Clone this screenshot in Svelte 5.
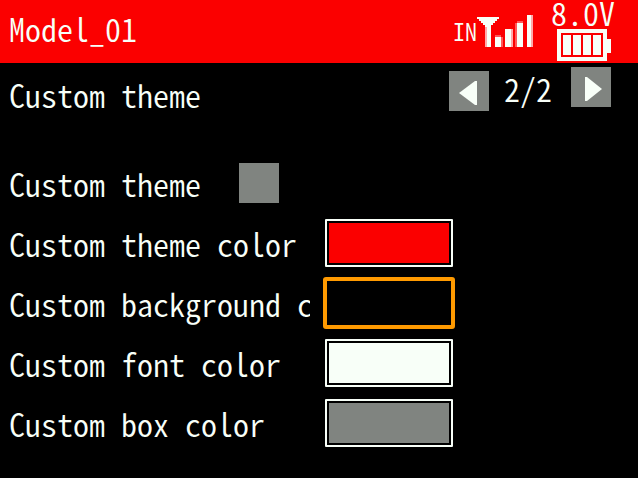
<script>
  const modelName = 'Model_01';
  const voltage = '8.0V';
  const pageCount = 2;

  let page = $state(2);
  let enabled = $state(false);
  let selected = $state('background');

  let colors = $state([
    { id: 'theme', label: 'Custom theme color', value: '#fb0000' },
    { id: 'background', label: 'Custom background color', value: '#000000' },
    { id: 'font', label: 'Custom font color', value: '#f8fff8' },
    { id: 'box', label: 'Custom box color', value: '#808480' }
  ]);
</script>

<div class="screen">
  <header class="topbar">
    <h1>{modelName}</h1>
    <div class="status">
      <span class="input-mode">IN</span>
      <svg class="signal" viewBox="0 0 56 32" shape-rendering="crispEdges" aria-hidden="true">
        <path fill="#f8fff8" d="M0 2h22v2h-2v2h-2v2h-2v2h-2v22h-4V12H8v-2H6V8H4V6H2V4H0z" />
        <path fill="#f8fff8" d="M18 22h6v10h-6zM28 14h6v18h-6zM40 8h6v24h-6zM50 0h4v32h-4z" />
        <path fill="#ffaaaa" d="M8 12h2v20H8zM34 14h2v18h-2zM54 0h2v32h-2z" />
        <path fill="#ff5858" d="M18 20h6v2h-6zM24 22h2v10h-2zM40 6h6v2h-6zM38 8h2v24h-2z" />
      </svg>
      <div class="battery">
        <span>{voltage}</span>
        <svg viewBox="0 0 56 32" shape-rendering="crispEdges" aria-hidden="true">
          <path fill="#f8fff8" fill-rule="evenodd" d="M2 0h50v10h4v14h-4v8H2zM6 4v24h42V4z" />
          <path fill="#f8fff8" d="M8 6h8v20H8zM18 6h8v20h-8zM28 6h8v20h-8zM38 6h8v20h-8z" />
        </svg>
      </div>
    </div>
  </header>

  <div class="title-row">
    <h2>Custom theme</h2>
    <nav class="pager">
      <button
        class="prev"
        aria-label="Previous page"
        onclick={() => (page = Math.max(1, page - 1))}
      >
        <svg viewBox="0 0 40 40"><path fill="#f8fff8" d="M10 22L26 10h2v24h-2z" /></svg>
      </button>
      <span>{page}/{pageCount}</span>
      <button
        class="next"
        aria-label="Next page"
        onclick={() => (page = Math.min(pageCount, page + 1))}
      >
        <svg viewBox="0 0 40 40"><path fill="#f8fff8" d="M14 10h2l15 12-15 12h-2z" /></svg>
      </button>
    </nav>
  </div>

  <main>
    <div class="row">
      <label class="short" for="enabled">Custom theme</label>
      <input id="enabled" type="checkbox" bind:checked={enabled} />
    </div>
    {#each colors as color (color.id)}
      <div class="row">
        <label for={color.id}>{color.label}</label>
        <input
          id={color.id}
          type="color"
          class:selected={selected === color.id}
          bind:value={color.value}
          onfocus={() => (selected = color.id)}
        />
      </div>
    {/each}
  </main>
</div>

<style>
  :global(body) {
    margin: 0;
    background: #000;
  }

  .screen {
    min-height: 100vh;
    background: #000;
    color: #f8fff8;
    font-family: 'Noto Sans CJK JP', 'Liberation Mono', monospace;
    font-size: 32px;
    font-weight: 350;
    line-height: 48px;
    /* half-width latin, every glyph is half an em */
    font-feature-settings: 'hwid' 1;
    white-space: nowrap;
  }

  h1,
  h2 {
    margin: 0;
    font-size: 32px;
    font-weight: 350;
  }

  /* Top bar */
  .topbar {
    display: flex;
    align-items: flex-start;
    justify-content: space-between;
    height: 63px;
    padding: 0 23px 0 9px;
    background: #fb0000;
  }

  h1 {
    line-height: 56px;
  }

  .status {
    display: flex;
    align-items: center;
    height: 62px;
  }

  .input-mode {
    font-size: 24px;
  }

  .signal {
    width: 56px;
    height: 32px;
    margin-right: 18px;
  }

  .battery {
    display: flex;
    flex-direction: column;
    align-items: center;
    align-self: flex-start;
    gap: 5px;
  }

  .battery span {
    line-height: 24px;
  }

  .battery svg {
    width: 56px;
    height: 32px;
  }

  /* Page title and pager */
  .title-row {
    display: flex;
    align-items: flex-start;
    justify-content: space-between;
    margin-bottom: 32px;
    padding: 4px 27px 0 9px;
  }

  h2 {
    line-height: 54px;
  }

  .pager {
    display: flex;
    align-items: flex-start;
    gap: 15px;
  }

  .pager span {
    line-height: 42px;
  }

  button {
    width: 40px;
    height: 40px;
    padding: 0;
    border: none;
    background: #808480;
  }

  button svg {
    display: block;
  }

  .prev {
    margin-top: 4px;
  }

  .next {
    margin-left: 4px;
  }

  /* Settings */
  .row {
    display: flex;
    align-items: center;
    height: 60px;
    padding-left: 9px;
  }

  label {
    width: 301px;
    margin-right: 15px;
    overflow: hidden;
    line-height: 50px;
  }

  label.short {
    width: 215px;
  }

  input {
    box-sizing: border-box;
    margin: 0;
    appearance: none;
  }

  input[type='checkbox'] {
    width: 40px;
    height: 40px;
    background: #808480;
  }

  input[type='checkbox']:checked {
    border: 8px solid #808480;
    background: #f8fff8;
  }

  input[type='color'] {
    width: 128px;
    height: 48px;
    padding: 2px;
    border: 2px solid #f8fff8;
    border-radius: 1px;
    background: #000;
  }

  input[type='color'].selected {
    border-color: #000;
    outline: 4px solid #ff9a00;
    outline-offset: -2px;
  }

  input[type='color']::-webkit-color-swatch-wrapper {
    padding: 0;
  }

  input[type='color']::-webkit-color-swatch {
    border: none;
    border-radius: 0;
  }
</style>
